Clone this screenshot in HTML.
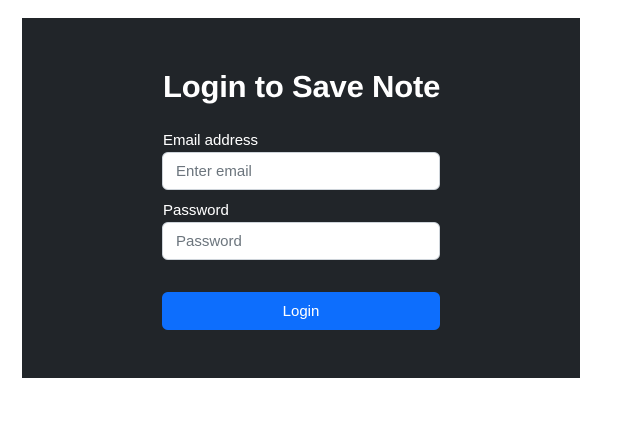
<!DOCTYPE html>
<html><head><style>
html,body{margin:0;padding:0;background:#fff;width:620px;height:422px;overflow:hidden;font-family:"Liberation Sans",sans-serif}
.box{position:absolute;left:22px;top:18px;width:558px;height:360px;background:#212529}
h1{position:absolute;left:163px;top:68px;margin:0;color:#fff;font-size:31px;font-weight:bold;letter-spacing:-0.2px;line-height:38px;white-space:nowrap}
.lbl{position:absolute;left:163px;color:#fff;font-size:15px;line-height:20px}
.inp{position:absolute;left:162px;width:276px;height:36px;background:#fff;border:1px solid #ced4da;border-radius:6px;box-sizing:content-box}
.inp span{position:absolute;left:13px;top:10px;font-size:15px;color:#6c757d;line-height:18px}
.btn{position:absolute;left:162px;top:292px;width:278px;height:38px;background:#0d6efd;border-radius:6px;color:#fff;font-size:15px;text-align:center;line-height:40px}
</style></head><body>
<div class="box"></div>
<h1>Login to Save Note</h1>
<div class="lbl" style="top:131px">Email address</div>
<div class="inp" style="top:152px"><span>Enter email</span></div>
<div class="lbl" style="top:201px">Password</div>
<div class="inp" style="top:222px"><span>Password</span></div>
<div class="btn">Login</div>
</body></html>
